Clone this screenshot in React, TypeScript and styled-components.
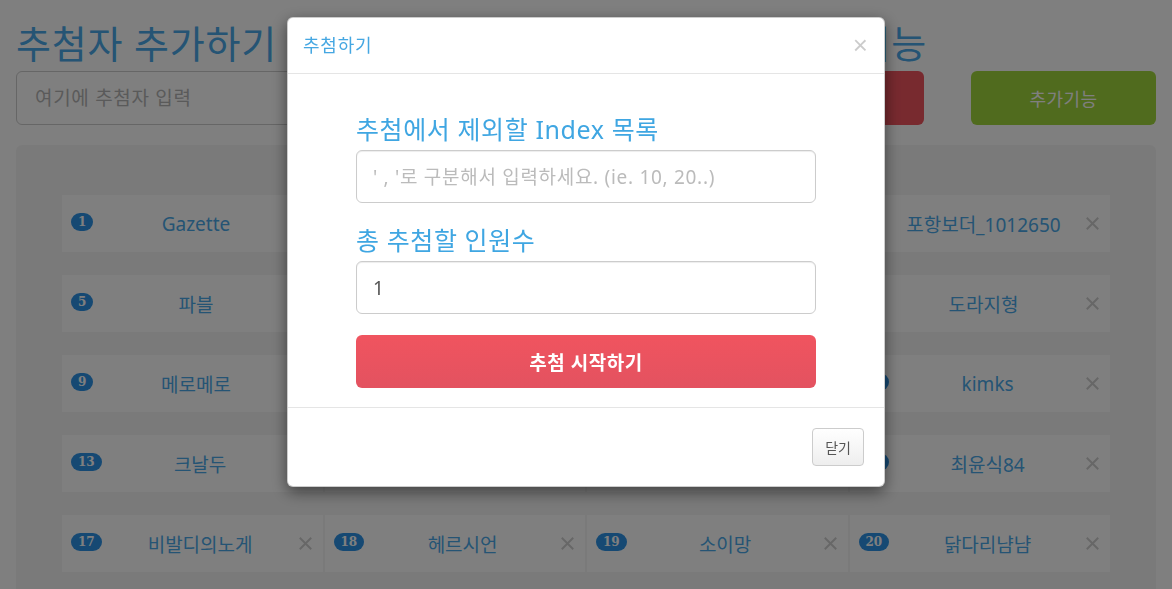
import styled, { createGlobalStyle } from "styled-components"

const GlobalStyle = createGlobalStyle`
  html, body {
    margin: 0;
    padding: 0;
    background: #ffffff;
  }
  body {
    font-family: "Noto Sans", "Noto Sans CJK KR", sans-serif;
    overflow: hidden;
  }
  * {
    box-sizing: border-box;
  }
`

const winners = [
    "Gazette", "루미너스", "별빛산책", "포항보더_1012650",
    "파블", "초코우유", "달빛소나타", "도라지형",
    "메로메로", "하늘정원", "sunny77", "kimks",
    "크날두", "푸른바다", "냥냥펀치", "최윤식84",
    "비발디의노게", "헤르시언", "소이망", "닭다리냠냠",
]

function RemoveIcon() {
    return (
        <svg width="13" height="13" viewBox="0 0 13 13">
            <path d="M1.5 1.5 L11.5 11.5 M11.5 1.5 L1.5 11.5" stroke="#cfcfcf" strokeWidth="2" strokeLinecap="square" />
        </svg>
    )
}

export default function App() {
    return (
        <>
            <GlobalStyle />
            <Page>
                <Top>
                    <Heading>추첨자 추가하기</Heading>
                    <Heading $side>추첨 기능</Heading>
                    <NameInput placeholder="여기에 추첨자 입력" />
                    <ActionBtn $color="#f0545f">추첨하기</ActionBtn>
                    <ActionBtn $color="#a0d63c">추가기능</ActionBtn>
                </Top>
                <Well>
                    {winners.map((name, i) => (
                        <Card key={i}>
                            <Badge>{i + 1}</Badge>
                            <Name>{name}</Name>
                            <RemoveIcon />
                        </Card>
                    ))}
                </Well>
            </Page>

            <Overlay>
                <Modal>
                    <ModalHeader>
                        <ModalTitle>추첨하기</ModalTitle>
                        <CloseX>×</CloseX>
                    </ModalHeader>
                    <ModalBody>
                        <Label>추첨에서 제외할 Index 목록</Label>
                        <FormInput placeholder="' , '로 구분해서 입력하세요. (ie. 10, 20..)" />
                        <Label $spaced>총 추첨할 인원수</Label>
                        <FormInput defaultValue="1" />
                        <StartBtn>추첨 시작하기</StartBtn>
                    </ModalBody>
                    <ModalFooter>
                        <CloseBtn>닫기</CloseBtn>
                    </ModalFooter>
                </Modal>
            </Overlay>
        </>
    )
}

const Page = styled.div`
    padding: 0 16px;
`

const Top = styled.div`
    display: grid;
    grid-template-columns: 1fr 185px 185px;
    grid-template-rows: 40px 54px;
    column-gap: 47px;
    row-gap: 8px;
    padding-top: 23px;
`

const Heading = styled.h1<{ $side?: boolean }>`
    grid-row: 1;
    grid-column: 1;
    margin: 0;
    font-size: 38px;
    line-height: 40px;
    font-weight: 400;
    letter-spacing: 0.8px;
    color: #4aa9e9;
    white-space: nowrap;
    ${p => p.$side && `
        grid-column: 2;
        justify-self: end;
        margin-right: -3px;
    `}
`

const NameInput = styled.input`
    grid-row: 2;
    height: 54px;
    border: 1px solid #cccccc;
    border-radius: 6px;
    padding: 0 18px;
    font-family: "Noto Sans", "Noto Sans CJK KR", sans-serif;
    font-size: 19px;
    letter-spacing: 0.7px;
    color: #555;
    outline: none;

    &::placeholder {
        color: #b4b4b4;
    }
`

const ActionBtn = styled.button<{ $color: string }>`
    grid-row: 2;
    height: 54px;
    border: none;
    border-radius: 6px;
    background: ${p => p.$color};
    color: #ffffff;
    font-family: "Noto Sans", "Noto Sans CJK KR", sans-serif;
    font-size: 18px;
    letter-spacing: 0.5px;
`

const Well = styled.div`
    margin-top: 20px;
    padding: 50px 46px;
    background: #f5f5f5;
    border-radius: 6px;
    display: grid;
    grid-template-columns: repeat(4, 1fr);
    gap: 23px 2px;
`

const Card = styled.div`
    height: 57px;
    background: #ffffff;
    display: flex;
    align-items: center;
    padding: 0 11px 0 9px;
`

const Badge = styled.span`
    background: #2d93e6;
    color: #ffffff;
    font-family: "DejaVu Serif", serif;
    font-weight: 700;
    font-size: 12px;
    line-height: 12px;
    padding: 3px 7px;
    border-radius: 10px;
    margin-top: -3px;
`

const Name = styled.div`
    flex: 1;
    text-align: center;
    font-size: 19px;
    color: #4aa9e9;
    white-space: nowrap;
`

const Overlay = styled.div`
    position: fixed;
    inset: 0;
    background: rgba(0, 0, 0, 0.5);
    display: flex;
    justify-content: center;
    align-items: flex-start;
    padding-top: 17px;
`

const Modal = styled.div`
    width: 598px;
    background: #ffffff;
    border: 1px solid rgba(0, 0, 0, 0.2);
    border-radius: 6px;
    box-shadow: 0 5px 15px rgba(0, 0, 0, 0.5);
    font-family: "Noto Sans", "Noto Sans CJK KR", sans-serif;
`

const ModalHeader = styled.div`
    display: flex;
    align-items: flex-start;
    justify-content: space-between;
    padding: 15px;
    border-bottom: 1px solid #e5e5e5;
`

const ModalTitle = styled.h4`
    margin: 0;
    font-size: 18px;
    line-height: 25px;
    font-weight: 400;
    letter-spacing: 0.8px;
    color: #45a7e2;
`

const CloseX = styled.span`
    font-family: "Liberation Sans", Arial, sans-serif;
    font-size: 26px;
    line-height: 1;
    color: #000;
    opacity: 0.2;
    margin: -1px 1px 0 0;
`

const ModalBody = styled.div`
    padding: 40px 68px 19px;
`

const Label = styled.h3<{ $spaced?: boolean }>`
    margin: ${p => (p.$spaced ? "22px" : "0")} 0 6px;
    font-size: 25px;
    line-height: 30px;
    font-weight: 400;
    letter-spacing: 0.6px;
    color: #3fa6e2;
`

const FormInput = styled.input`
    display: block;
    width: 100%;
    height: 53px;
    border: 1px solid #cccccc;
    border-radius: 6px;
    box-shadow: inset 0 1px 1px rgba(0, 0, 0, 0.075);
    padding: 0 16px;
    font-family: "Noto Sans", "Noto Sans CJK KR", sans-serif;
    font-size: 19px;
    letter-spacing: 0.7px;
    color: #555;
    outline: none;

    &::placeholder {
        color: #bbbbbb;
    }
`

const StartBtn = styled.button`
    display: block;
    width: 100%;
    height: 53px;
    margin-top: 21px;
    border: none;
    border-radius: 6px;
    background: linear-gradient(#f0545f, #e35260);
    color: #ffffff;
    font-family: "Noto Sans", "Noto Sans CJK KR", sans-serif;
    font-size: 19px;
    font-weight: 700;
    letter-spacing: 0.5px;
`

const ModalFooter = styled.div`
    display: flex;
    justify-content: flex-end;
    padding: 20px;
    border-top: 1px solid #e5e5e5;
`

const CloseBtn = styled.button`
    height: 38px;
    padding: 0 12px;
    border: 1px solid #cccccc;
    border-radius: 4px;
    background: linear-gradient(#ffffff, #eeeeee);
    color: #555;
    font-family: "Noto Sans", "Noto Sans CJK KR", sans-serif;
    font-size: 14px;
`
